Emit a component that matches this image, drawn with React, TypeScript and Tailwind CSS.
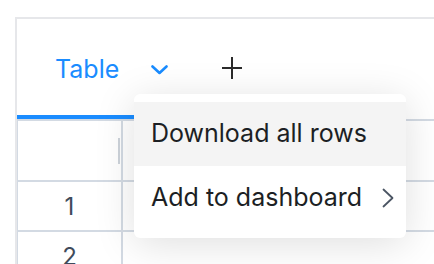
import { useState } from "react";

const rows = [
    { id: 1, value: "5" },
    { id: 2, value: "4" },
];

function ChevronDown() {
    return (
        <svg width="17" height="10" viewBox="0 0 17 10" fill="none">
            <path d="M1.5 1.5L8.5 8L15.5 1.5" stroke="#1a8cff" strokeWidth="2.6" strokeLinecap="round" strokeLinejoin="round" />
        </svg>
    );
}

function Plus() {
    return (
        <svg width="22" height="24" viewBox="0 0 22 24" fill="none">
            <path d="M11 1V23M1 12H21" stroke="#2b2b2b" strokeWidth="2" />
        </svg>
    );
}

function ChevronRight() {
    return (
        <svg width="12" height="20" viewBox="0 0 12 20" fill="none">
            <path d="M1.5 1.5L10.5 10L1.5 18.5" stroke="#4b5563" strokeWidth="1.8" strokeLinecap="round" strokeLinejoin="round" />
        </svg>
    );
}

export default function App() {
    const [active, setActive] = useState(0);

    return (
        <div className="relative h-[264px] w-[434px] overflow-hidden bg-white" style={{ fontFamily: "Inter, 'Noto Sans', sans-serif" }}>
            <div className="ml-[15px] mt-[17px] w-[440px] border-l-2 border-t-2 border-[#e6e7ea]">
                {/* tabs */}
                <div className="flex h-[100px] items-end">
                    <div className="flex h-full w-[180px] items-center border-b-4 border-[#1a8cff] pl-[38px] pt-[4px]">
                        <span className="text-[25px] leading-none text-[#1a8cff]">Table</span>
                        <span className="ml-[32px] mt-[1px]"><ChevronDown /></span>
                    </div>
                    <div className="flex h-full items-center pb-[3px] pl-[24px]">
                        <Plus />
                    </div>
                </div>

                {/* table */}
                <div className="border-l border-t-2 border-[#d3dae3]">
                    <div className="flex h-[61px] border-b-2 border-[#d3dae3]">
                        <div className="relative w-[105px] border-r-2 border-[#d3dae3]">
                            <div className="absolute right-[1px] top-[17px] h-[26px] w-[2px] bg-[#cdd3da]" />
                        </div>
                        <div className="w-[300px]" />
                        <div />
                    </div>
                    {rows.map((r) => (
                        <div key={r.id} className="flex h-[50px] border-b-2 border-[#d3dae3]">
                            <div className="flex w-[105px] items-center justify-center border-r-2 border-[#d3dae3] pt-[2px] text-[24px] text-[#3f4b5b]">
                                {r.id}
                            </div>
                            <div className="w-[300px]" />
                            <div className="flex items-center pl-[12px] text-[24px] text-[#1f2937]">{r.value}</div>
                        </div>
                    ))}
                </div>
            </div>

            {/* dropdown menu */}
            <div className="absolute left-[134px] top-[94px] w-[272px] rounded-[6px] bg-white py-[8px] shadow-[0_6px_40px_rgba(0,0,0,0.13)]">
                {["Download all rows", "Add to dashboard"].map((label, i) => (
                    <div
                        key={label}
                        onMouseEnter={() => setActive(i)}
                        className={
                            "flex h-[64px] items-center justify-between pl-[17px] pr-[12px] text-[25px] text-[#1c1f24] " +
                            (active === i ? "bg-[#f4f4f4]" : "bg-white")
                        }
                    >
                        <span>{label}</span>
                        {i === 1 && <ChevronRight />}
                    </div>
                ))}
            </div>
        </div>
    );
}
